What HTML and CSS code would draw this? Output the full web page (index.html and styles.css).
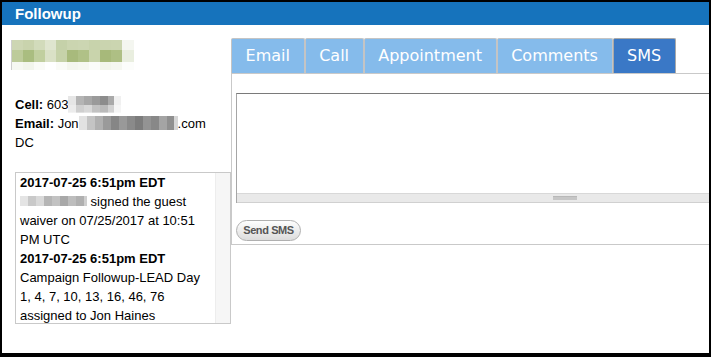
FILE: index.html
```html
<!DOCTYPE html>
<html lang="en">
<head>
<meta charset="utf-8">
<title>Followup</title>
<link rel="stylesheet" href="styles.css">
</head>
<body>
<div class="frame">
  <header class="bar">Followup</header>
  <div class="main">
    <aside class="left">
      <div class="name-blur">
        <div class="nb-row nb-row1"></div>
        <div class="nb-row nb-row2"></div>
        <div class="nb-row nb-row3"></div>
      </div>
      <div class="contact">
        <div><b>Cell:</b> 603<span class="blur blur-phone"></span></div>
        <div><b>Email:</b> Jon<span class="blur blur-email"></span>.com</div>
        <div>DC</div>
      </div>
      <div class="history">
        <div class="history-text">
          <div class="entry-date">2017-07-25 6:51pm EDT</div>
          <div><span class="blur blur-guest"></span> signed the guest waiver on 07/25/2017 at 10:51 PM UTC</div>
          <div class="entry-date">2017-07-25 6:51pm EDT</div>
          <div>Campaign Followup-LEAD Day 1, 4, 7, 10, 13, 16, 46, 76 assigned to Jon Haines</div>
        </div>
        <div class="history-scroll"></div>
      </div>
    </aside>
    <section class="right">
      <nav class="tabs">
        <span class="tab">Email</span>
        <span class="tab">Call</span>
        <span class="tab">Appointment</span>
        <span class="tab">Comments</span>
        <span class="tab tab-active">SMS</span>
      </nav>
      <div class="panel">
        <div class="sms-input">
          <div class="sms-area"></div>
          <div class="sms-bar"><span class="grip"></span></div>
        </div>
        <button class="send" type="button">Send SMS</button>
      </div>
    </section>
  </div>
</div>
</body>
</html>
```

FILE: styles.css
```css
html, body {
  margin: 0;
  padding: 0;
  background: #000;
}
body {
  width: 711px;
  height: 357px;
  overflow: hidden;
  font-family: "Liberation Sans", Arial, sans-serif;
}
.frame {
  box-sizing: border-box;
  width: 711px;
  height: 357px;
  border-style: solid;
  border-color: #000;
  border-width: 2px 2px 4px 2px;
  background: #fff;
  overflow: hidden;
  display: flex;
  flex-direction: column;
}
.bar {
  height: 23px;
  flex: none;
  background: #1673bc;
  color: #fff;
  font-weight: bold;
  font-size: 15px;
  line-height: 23px;
  padding-left: 13px;
}
.main {
  display: flex;
  flex: 1;
  min-height: 0;
}
.left {
  width: 229px;
  flex: none;
  padding-top: 15px;
  font-size: 13px;
  color: #000;
}
.name-blur {
  margin-left: 9px;
  width: 123px;
  border-left: 1px solid #cfcfcf;
}
.nb-row {
  width: 122px;
}
.nb-row1 {
  height: 10px;
  background: linear-gradient(90deg, #cdd6b3 0 11px, #c9d3ad 11px 22px, #d2dbbb 22px 33px, #dfe5cf 33px 44px, #c5d1a9 44px 55px, #cbd5b0 55px 66px, #ccd6b2 66px 77px, #c8d3ac 77px 88px, #cad4af 88px 99px, #cbd5b0 99px 110px, #f4f6f0 110px);
}
.nb-row2 {
  height: 12px;
  background: linear-gradient(90deg, #bdcb9a 0 11px, #aabd80 11px 22px, #c1cf9f 22px 33px, #dae1c6 33px 44px, #c6d2a9 44px 55px, #a8ba7c 55px 66px, #b0c187 66px 77px, #c9d4ac 77px 88px, #a7b97a 88px 99px, #aebf84 99px 110px, #e9eedf 110px);
}
.nb-row3 {
  height: 8px;
  background: linear-gradient(90deg, #f6f8f2 0 11px, #f2f5ec 11px 22px, #fafbf7 22px 33px, #fff 33px 44px, #fafbf7 44px 55px, #f4f6ee 55px 66px, #f6f8f1 66px 77px, #fbfcf9 77px 88px, #f2f5eb 88px 99px, #f5f7f0 99px 110px, #fcfdfb 110px);
}
.contact {
  margin: 25px 0 0 13px;
  line-height: 19px;
}
.blur {
  display: inline-block;
}
.blur-phone {
  width: 53px;
  height: 17px;
  vertical-align: -4px;
  background:
    linear-gradient(90deg, #e6e6e6 0 8px, #b4b4b4 8px 16px, #a7a7a7 16px 24px, #9a9a9a 24px 32px, #8c8c8c 32px 40px, #a9a9a9 40px 46px, #f0f0f0 46px) top / 100% 55% no-repeat,
    linear-gradient(90deg, #ececec 0 8px, #cfcfcf 8px 16px, #d8d8d8 16px 24px, #c2c2c2 24px 32px, #bababa 32px 40px, #d2d2d2 40px 46px, #f5f5f5 46px) bottom / 100% 45% no-repeat;
}
.blur-email {
  width: 99px;
  height: 14px;
  vertical-align: -2px;
  background:
    linear-gradient(90deg, #e2e2e2 0 8px, #c4c4c4 8px 16px, #b0b0b0 16px 24px, #9a9a9a 24px 32px, #868686 32px 40px, #999 40px 48px, #8a8a8a 48px 56px, #7c7c7c 56px 64px, #939393 64px 72px, #888 72px 80px, #a4a4a4 80px 88px, #8f8f8f 88px 95px, #d6d6d6 95px);
}
.blur-guest {
  width: 67px;
  height: 10px;
  vertical-align: 0;
  background:
    linear-gradient(90deg, #e4e4e4 0 8px, #c9c9c9 8px 16px, #d9d9d9 16px 24px, #b5b5b5 24px 32px, #c2c2c2 32px 40px, #a8a8a8 40px 48px, #bdbdbd 48px 56px, #b0b0b0 56px 64px, #cfcfcf 64px);
}
.history {
  margin: 20px 0 0 13px;
  width: 216px;
  height: 152px;
  box-sizing: border-box;
  border: 1px solid #c9c9c9;
  display: flex;
  overflow: hidden;
}
.history-text {
  flex: 1;
  padding: 0 6px 0 4px;
  line-height: 19px;
  font-size: 13px;
}
.entry-date {
  font-weight: bold;
}
.history-scroll {
  width: 14px;
  flex: none;
  background: #f6f6f6;
  border-left: 1px solid #ededed;
}
.right {
  flex: 1;
  padding-top: 13px;
  min-width: 0;
}
.tabs {
  display: flex;
  height: 35px;
  box-sizing: border-box;
}
.tab {
  box-sizing: border-box;
  height: 35px;
  padding: 0 13.6px;
  border: 1px solid #c4c4c4;
  border-bottom: none;
  border-radius: 2px 2px 0 0;
  background: #85bbeb;
  color: #fff;
  font-family: "DejaVu Sans", Verdana, sans-serif;
  font-size: 16px;
  line-height: 33px;
  white-space: nowrap;
}
.tab-active {
  background: #3a78c6;
  border-color: #a9a9a9;
}
.panel {
  width: 700px;
  box-sizing: border-box;
  border: 1px solid #c9c9c9;
  border-right: none;
  padding: 19px 0 3px 4px;
}
.sms-input {
  width: 656px;
  border-top: 1px solid #7a7a7a;
  border-left: 1px solid #a6a6a6;
}
.sms-area {
  height: 99px;
  background: #fff;
}
.sms-bar {
  height: 8px;
  background: #e9e9e9;
  border-top: 1px solid #d8d8d8;
  border-bottom: 1px solid #d0d0d0;
  display: flex;
  justify-content: center;
  align-items: center;
}
.grip {
  width: 24px;
  height: 3px;
  background: #c6c6c6;
  border-top: 1px solid #b8b8b8;
}
.send {
  display: block;
  margin-top: 17px;
  width: 65px;
  height: 21px;
  padding: 0;
  border: 1px solid #b0b0b0;
  border-radius: 11px;
  background: linear-gradient(#fefefe, #dcdcdc);
  color: #555;
  font-family: "Liberation Sans", Arial, sans-serif;
  font-weight: bold;
  font-size: 11px;
  letter-spacing: -0.4px;
  line-height: 19px;
  text-align: center;
}
```
